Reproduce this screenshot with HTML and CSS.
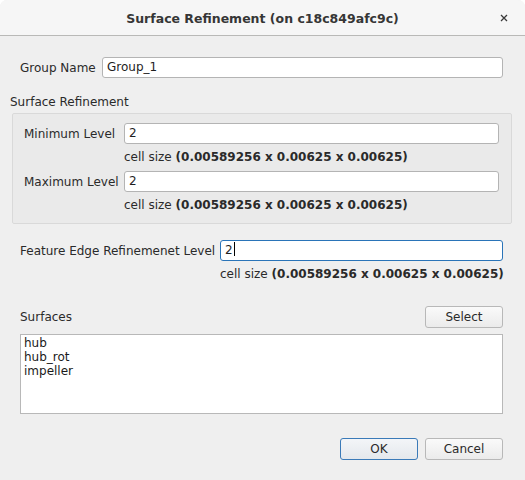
FILE: index.html
```html
<!DOCTYPE html>
<html>
<head>
<meta charset="utf-8">
<link rel="stylesheet" href="styles.css">
</head>
<body>
<div class="window">
  <div class="titlebar">
    <div class="title">Surface Refinement (on c18c849afc9c)</div>
    <div class="close">
      <svg width="8" height="8" viewBox="0 0 8 8"><path d="M1 1 L7 7 M7 1 L1 7" stroke="#3a3a3a" stroke-width="1.3" fill="none"/></svg>
    </div>
  </div>
  <div class="content">
    <div class="row group-row">
      <span class="label group-label">Group Name</span>
      <div class="input group-input">Group_1</div>
    </div>
    <div class="section-title">Surface Refinement</div>
    <div class="groupbox">
      <div class="row">
        <span class="label level-label">Minimum Level</span>
        <div class="input level-input">2</div>
      </div>
      <div class="cellsize level-cell">cell size <b>(0.00589256 x 0.00625 x 0.00625)</b></div>
      <div class="row max-row">
        <span class="label level-label">Maximum Level</span>
        <div class="input level-input">2</div>
      </div>
      <div class="cellsize level-cell">cell size <b>(0.00589256 x 0.00625 x 0.00625)</b></div>
    </div>
    <div class="row feature-row">
      <span class="label feature-label">Feature Edge Refinemenet Level</span>
      <div class="input feature-input focused">2<span class="caret"></span></div>
    </div>
    <div class="cellsize feature-cell">cell size <b>(0.00589256 x 0.00625 x 0.00625)</b></div>
    <div class="row surfaces-row">
      <span class="label">Surfaces</span>
      <div class="button">Select</div>
    </div>
    <div class="list">
      <div class="item">hub</div>
      <div class="item">hub_rot</div>
      <div class="item">impeller</div>
    </div>
    <div class="buttons">
      <div class="button default">OK</div>
      <div class="button">Cancel</div>
    </div>
  </div>
</div>
</body>
</html>
```
FILE: styles.css
```css
html, body {
  margin: 0;
  padding: 0;
  background: #ffffff;
}
body {
  font-family: "DejaVu Sans", sans-serif;
  font-size: 12px;
  color: #2a2a2a;
}
.window {
  width: 525px;
  height: 480px;
  background: #efefef;
  border-radius: 7px 7px 0 0;
  overflow: hidden;
  display: flex;
  flex-direction: column;
}
.titlebar {
  height: 35px;
  flex: none;
  background: #f6f6f6;
  border-bottom: 1px solid #b9b9b7;
  display: flex;
  align-items: center;
  justify-content: center;
  position: relative;
}
.title {
  font-weight: bold;
  font-size: 12.5px;
  color: #363636;
  padding-top: 1px;
}
.close {
  position: absolute;
  right: 17px;
  top: 14px;
  width: 8px;
  height: 8px;
  display: flex;
}
.content {
  padding: 21px 22px 0 20px;
  display: flex;
  flex-direction: column;
}
.row {
  display: flex;
  align-items: center;
}
.input {
  height: 19px;
  line-height: 19px;
  background: #ffffff;
  border: 1px solid #b4b4b4;
  border-radius: 3px;
  padding-left: 4px;
  box-sizing: content-box;
  color: #1e1e1e;
}
.group-label {
  width: 82px;
}
.group-input {
  flex: 1;
}
.section-title {
  margin: 16px 0 0 -10px;
  height: 17px;
  line-height: 17px;
}
.groupbox {
  margin: 2px -9px 0 -8px;
  border: 1px solid #d9d9d9;
  border-radius: 2px;
  background: #eaeaea;
  padding: 9px 12px 0 10px;
  height: 100px;
  box-sizing: content-box;
}
.level-label {
  width: 100px;
  padding-left: 1px;
}
.level-input {
  flex: 1;
}
.cellsize {
  height: 27px;
  line-height: 27px;
  white-space: nowrap;
}
.level-cell {
  padding-left: 101px;
}
.feature-row {
  margin-top: 16px;
}
.feature-label {
  width: 200px;
}
.feature-input {
  flex: 1;
}
.focused {
  border-color: #2a74b8;
}
.caret {
  display: inline-block;
  width: 1px;
  height: 14px;
  background: #000;
  vertical-align: -2px;
  margin-left: 1px;
}
.feature-cell {
  padding-left: 200px;
  height: 26px;
  line-height: 26px;
}
.surfaces-row {
  margin-top: 19px;
  justify-content: space-between;
}
.button {
  width: 76px;
  height: 20px;
  line-height: 20px;
  text-align: center;
  border: 1px solid #b8b8b8;
  border-radius: 3px;
  background: linear-gradient(#fafafa, #ebebeb);
  color: #2a2a2a;
}
.button.default {
  border-color: #3a7ab8;
  background: linear-gradient(#f3f5f8, #e4e8ec);
}
.list {
  margin-top: 6px;
  height: 77px;
  background: #ffffff;
  border: 1px solid #b8b8b8;
  padding: 1px 0 0 3px;
}
.item {
  height: 14px;
  line-height: 14px;
  color: #1a1a1a;
}
.buttons {
  display: flex;
  justify-content: flex-end;
  gap: 7px;
  margin-top: 24px;
}
```
